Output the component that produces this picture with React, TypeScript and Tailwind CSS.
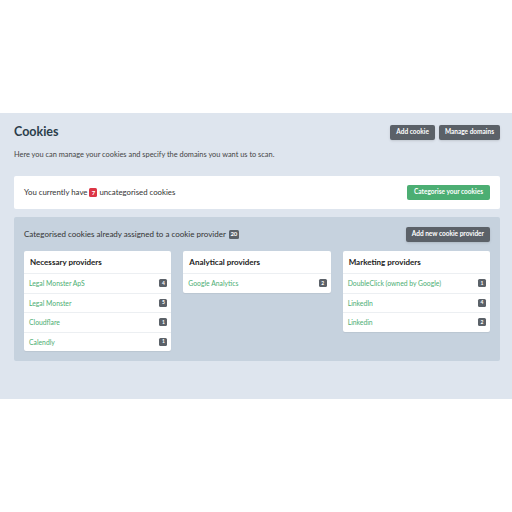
const providers = [
  {
    title: "Necessary providers",
    items: [
      { name: "Legal Monster ApS", count: 4 },
      { name: "Legal Monster", count: 5 },
      { name: "Cloudflare", count: 1 },
      { name: "Calendly", count: 1 },
    ],
  },
  {
    title: "Analytical providers",
    items: [{ name: "Google Analytics", count: 2 }],
  },
  {
    title: "Marketing providers",
    items: [
      { name: "DoubleClick (owned by Google)", count: 1 },
      { name: "LinkedIn", count: 4 },
      { name: "Linkedin", count: 2 },
    ],
  },
];

function Badge({ children, className = "" }: { children: React.ReactNode; className?: string }) {
  return (
    <span
      className={
        "inline-flex h-[8px] min-w-[8px] items-center justify-center rounded-[1.5px] bg-[#5b6168] px-[1.5px] text-[5px] font-bold leading-none text-white " +
        className
      }
    >
      {children}
    </span>
  );
}

function DarkButton({ children }: { children: React.ReactNode }) {
  return (
    <button
      type="button"
      className="h-[15px] rounded-[2px] bg-[#5b6168] px-[6px] text-[6.5px] font-bold leading-none text-white shadow-sm"
    >
      {children}
    </button>
  );
}

export default function App() {
  return (
    <div className="h-[512px] bg-white pt-[113px] font-['Lato',sans-serif] text-[#333]">
      <div className="flex h-[286px] flex-col bg-[#dee5ee] pl-[14px] pr-[12px] pt-[12px]">
        <div className="flex h-[15px] items-center justify-between">
          <h1 className="text-[12.5px] font-bold leading-none text-[#2b3e4b]">Cookies</h1>
          <div className="flex gap-[4px]">
            <DarkButton>Add cookie</DarkButton>
            <DarkButton>Manage domains</DarkButton>
          </div>
        </div>
        <p className="mt-[10px] text-[7.4px] leading-[10px] text-[#444]">
          Here you can manage your cookies and specify the domains you want us to scan.
        </p>

        <div className="mt-[16px] flex h-[33px] items-center justify-between rounded-[2px] bg-white px-[10px]">
          <div className="flex items-center gap-[2px] text-[7.8px] text-[#333]">
            <span>You currently have</span>
            <span className="inline-flex h-[9px] min-w-[8px] items-center justify-center rounded-[1.5px] bg-[#dc3545] px-[1px] text-[6px] font-bold leading-none text-white">
              7
            </span>
            <span>uncategorised cookies</span>
          </div>
          <button
            type="button"
            className="h-[15px] rounded-[2px] bg-[#4cae73] px-[7px] text-[6.5px] font-bold leading-none text-white"
          >
            Categorise your cookies
          </button>
        </div>

        <div className="mt-[8px] h-[144px] rounded-[2px] bg-[#c6d2de] px-[10px] pt-[9px]">
          <div className="flex h-[16px] items-center justify-between">
            <div className="flex items-center gap-[3px] text-[8px] text-[#333]">
              <span>Categorised cookies already assigned to a cookie provider</span>
              <Badge className="h-[9px] text-[6px]">20</Badge>
            </div>
            <DarkButton>Add new cookie provider</DarkButton>
          </div>

          <div className="mt-[9px] grid grid-cols-3 items-start gap-[12px]">
            {providers.map((p) => (
              <div key={p.title} className="overflow-hidden rounded-[2px] bg-white shadow-[0_1px_1px_rgba(0,0,0,0.06)]">
                <div className="flex h-[22px] items-center px-[6px] text-[8px] font-bold text-[#222]">
                  {p.title}
                </div>
                {p.items.map((it) => (
                  <div
                    key={it.name}
                    className="flex h-[19.5px] items-center justify-between border-t border-[#eceff2] pl-[5px] pr-[4px]"
                  >
                    <span className="text-[6.8px] text-[#4cae73]">{it.name}</span>
                    <Badge>{it.count}</Badge>
                  </div>
                ))}
              </div>
            ))}
          </div>
        </div>
      </div>
    </div>
  );
}
